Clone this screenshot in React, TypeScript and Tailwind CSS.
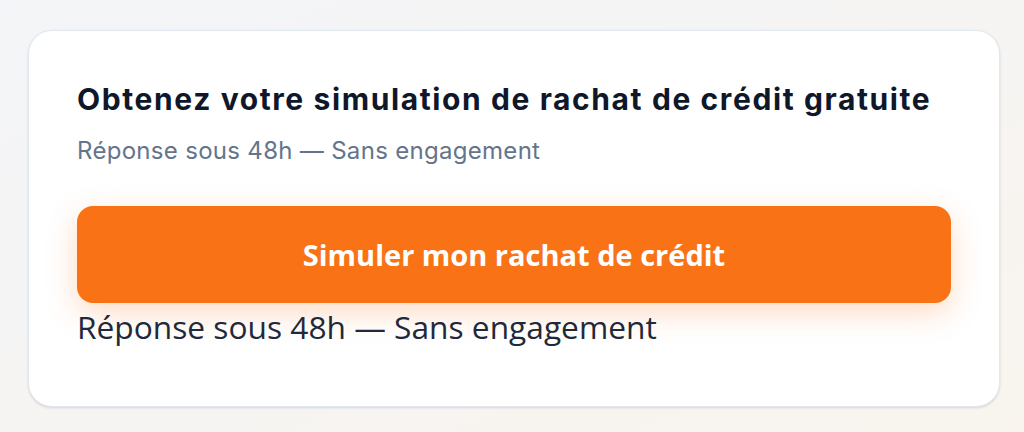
import React from "react";

export default function App() {
  return (
    <div className="w-[1024px] h-[432px] bg-gradient-to-br from-[#f3f5f8] to-[#f9f4ee] pt-[30px] pl-[28px]">
      <div className="w-[972px] h-[377px] flex flex-col bg-white border border-[#e2e8f0] rounded-[24px] shadow-sm px-12 pt-12">
        <h2 className="font-['Inter',sans-serif] text-[30px] leading-[40px] font-bold tracking-[1.6px] text-[#0f172a]">
          Obtenez votre simulation de rachat de crédit gratuite
        </h2>
        <p className="mt-4 font-['Inter',sans-serif] text-[24px] leading-[32px] tracking-[0.3px] text-[#64748b]">
          Réponse sous 48h — Sans engagement
        </p>
        <button className="mt-[39px] w-full h-[97px] rounded-2xl bg-[#f97316] text-white font-['Open_Sans',sans-serif] text-[29px] font-bold shadow-[0_10px_30px_rgba(249,115,22,0.25)]">
          Simuler mon rachat de crédit
        </button>
        <p className="mt-[4px] font-['Open_Sans',sans-serif] text-[31.7px] leading-[40px] text-[#1e293b]">
          Réponse sous 48h — Sans engagement
        </p>
      </div>
    </div>
  );
}
